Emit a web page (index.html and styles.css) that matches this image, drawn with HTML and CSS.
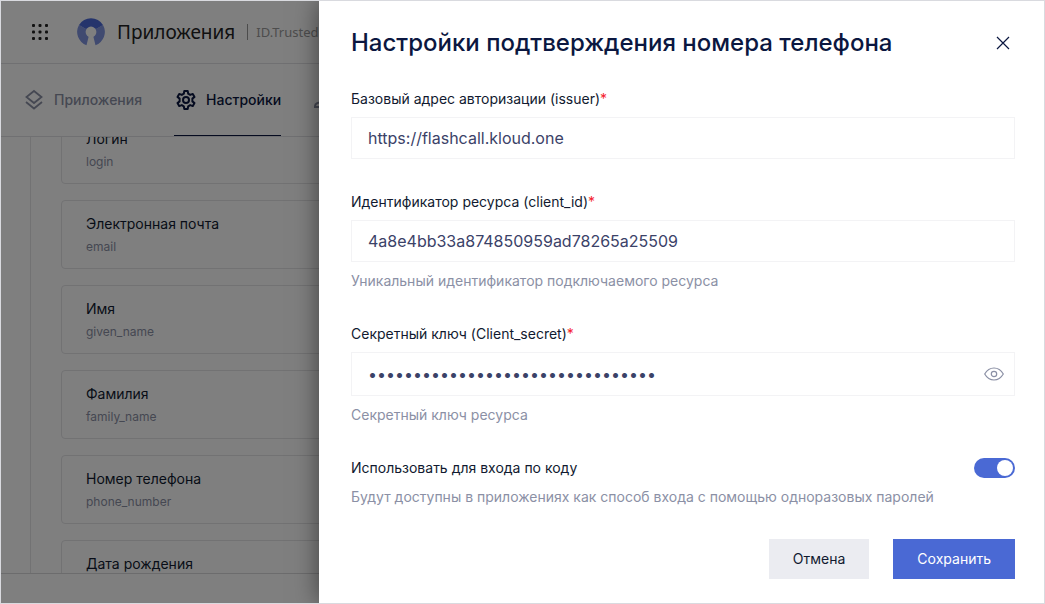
FILE: index.html
```html
<!DOCTYPE html>
<html lang="ru">
<head>
  <meta charset="UTF-8">
  <meta name="viewport" content="width=device-width, initial-scale=1.0">
  <title>Настройки подтверждения номера телефона</title>
  <link rel="stylesheet" href="styles.css">
</head>
<body>

<div class="app">
  <header class="header">
    <button class="apps-button" type="button" aria-label="Меню">
      <svg width="18" height="18" viewBox="0 0 18 18" fill="#222">
        <rect x="1" y="1" width="3" height="3" rx="1"/><rect x="7.500" y="1" width="3" height="3" rx="1"/><rect x="14" y="1" width="3" height="3" rx="1"/>
        <rect x="1" y="7.500" width="3" height="3" rx="1"/><rect x="7.500" y="7.500" width="3" height="3" rx="1"/><rect x="14" y="7.500" width="3" height="3" rx="1"/>
        <rect x="1" y="14" width="3" height="3" rx="1"/><rect x="7.500" y="14" width="3" height="3" rx="1"/><rect x="14" y="14" width="3" height="3" rx="1"/>
      </svg>
    </button>
    <svg class="logo" width="28" height="28" viewBox="0 0 28 28">
      <path fill="#8095e0" d="M2 7 L14 14 L26 7 A14 14 0 0 1 18.500 27.200 L16.200 18 H11.800 L9.500 27.200 A14 14 0 0 1 2 7Z"/>
      <path fill="#4a69d8" d="M2 7 A14 14 0 0 1 26 7 L14 14Z"/>
      <circle cx="14" cy="14" r="5.400" fill="#fff"/>
    </svg>
    <span class="header-title">Приложения</span>
    <span class="header-sub">ID.Trusted</span>
  </header>

  <nav class="tabs">
    <a class="tab" href="#apps">
      <svg width="24" height="24" viewBox="0 0 24 24" fill="none" stroke="currentColor" stroke-width="1.800">
        <path d="M12 3 L19.500 9 L12 15 L4.500 9Z"/>
        <path d="M4 14 L12 20.500 L20 14"/>
      </svg>
      Приложения
    </a>
    <a class="tab tab-active" href="#settings">
      <svg width="24" height="24" viewBox="0 0 24 24" fill="none" stroke="currentColor" stroke-width="2" stroke-linejoin="round">
        <path d="M10.300 3 h3.400 l.5 2.700 2 1.200 2.600-1 1.700 3 -2.100 1.700 v2.800 l2.100 1.700 -1.700 3 -2.600-1 -2 1.200 -.5 2.700 h-3.400 l-.5-2.700 -2-1.200 -2.600 1 -1.700-3 2.100-1.700 v-2.800 l-2.100-1.700 1.700-3 2.600 1 2-1.200Z"/>
        <circle cx="12" cy="12" r="3"/>
      </svg>
      Настройки
    </a>
    <a class="tab" href="#users" aria-label="Пользователи">
      <svg width="24" height="24" viewBox="0 0 24 24" fill="none" stroke="currentColor" stroke-width="2">
        <circle cx="12" cy="8" r="4"/>
        <path d="M2 19 V18 C2 15 5 14 12 14 C19 14 22 15 22 18 V19Z"/>
      </svg>
    </a>
  </nav>

  <main class="content">
    <div class="panel">
      <div class="claim"><span class="claim-name">Логин</span><span class="claim-key">login</span></div>
      <div class="claim"><span class="claim-name">Электронная почта</span><span class="claim-key">email</span></div>
      <div class="claim"><span class="claim-name">Имя</span><span class="claim-key">given_name</span></div>
      <div class="claim"><span class="claim-name">Фамилия</span><span class="claim-key">family_name</span></div>
      <div class="claim"><span class="claim-name">Номер телефона</span><span class="claim-key">phone_number</span></div>
      <div class="claim"><span class="claim-name">Дата рождения</span></div>
    </div>
  </main>

  <footer class="footer"></footer>

  <div class="overlay"></div>

  <form class="drawer">
    <div class="drawer-header">
      <h1>Настройки подтверждения номера телефона</h1>
      <button class="close-button" type="button" aria-label="Закрыть">
        <svg width="14" height="14" viewBox="0 0 14 14" fill="none" stroke="#0b1740" stroke-width="1.200">
          <path d="M1 1 L13 13 M13 1 L1 13"/>
        </svg>
      </button>
    </div>

    <div class="field">
      <label for="issuer">Базовый адрес авторизации (issuer)<span class="required">*</span></label>
      <input class="text-input" type="text" id="issuer" value="https://flashcall.kloud.one">
    </div>

    <div class="field">
      <label for="client-id">Идентификатор ресурса (client_id)<span class="required">*</span></label>
      <input class="text-input" type="text" id="client-id" value="4a8e4bb33a874850959ad78265a25509">
      <p class="hint">Уникальный идентификатор подключаемого ресурса</p>
    </div>

    <div class="field">
      <label for="client-secret">Секретный ключ (Client_secret)<span class="required">*</span></label>
      <div class="secret">
        <input type="password" id="client-secret" value="00000000000000000000000000000000">
        <button class="eye-button" type="button" aria-label="Показать ключ">
          <svg width="20" height="14" viewBox="0 0 20 14" fill="none" stroke="#8b90a5" stroke-width="1.200">
            <path d="M0.700 7 C3 3 6 1 10 1 C14 1 17 3 19.300 7 C17 11 14 13 10 13 C6 13 3 11 0.700 7Z"/>
            <circle cx="10" cy="7" r="2.700"/>
          </svg>
        </button>
      </div>
      <p class="hint">Секретный ключ ресурса</p>
    </div>

    <div class="field">
      <div class="switch-row">
        <label for="use-code">Использовать для входа по коду</label>
        <input class="switch" type="checkbox" id="use-code" checked>
      </div>
      <p class="hint">Будут доступны в приложениях как способ входа с помощью одноразовых паролей</p>
    </div>

    <div class="actions">
      <button class="button button-cancel" type="button">Отмена</button>
      <button class="button button-save" type="submit">Сохранить</button>
    </div>
  </form>
</div>

</body>
</html>
```
FILE: styles.css
```css
* {
  box-sizing: border-box;
}

body {
  margin: 0;
  font-family: Inter, sans-serif;
  font-size: 14px;
  line-height: 20px;
  color: #0b1740;
}

button {
  padding: 0;
  border: none;
  background: none;
  font: inherit;
  cursor: pointer;
}

svg {
  display: block;
  flex-shrink: 0;
}

.app {
  position: relative;
  display: flex;
  flex-direction: column;
  height: 100vh;
  border: 1px solid #d9dadf;
  overflow: hidden;
}

/* Header */
.header {
  display: flex;
  align-items: center;
  height: 63px;
  flex-shrink: 0;
  padding-left: 30px;
  border-bottom: 1px solid #e0e0e4;
}

.logo {
  margin-left: 28px;
}

.header-title {
  margin-left: 12px;
  font-family: "Noto Sans", sans-serif;
  font-size: 19px;
  color: #222;
}

.header-sub {
  margin-left: 12px;
  padding-left: 8px;
  border-left: 1px solid #999;
  font-family: "Noto Sans", sans-serif;
  font-size: 13px;
  line-height: 16px;
  color: #9a9a9a;
}

/* Tabs */
.tabs {
  display: flex;
  gap: 32px;
  height: 73px;
  flex-shrink: 0;
  padding-left: 21px;
  border-bottom: 1px solid #e0e0e4;
}

.tab {
  display: flex;
  align-items: center;
  gap: 8px;
  border-bottom: 1px solid transparent;
  font-weight: 500;
  color: #8b90a5;
  text-decoration: none;
}

.tab-active {
  border-color: #0b1740;
  color: #0b1740;
}

/* List of profile fields */
.content {
  flex: 1;
  min-height: 0;
  padding-left: 29px;
  overflow: hidden;
}

.panel {
  display: flex;
  flex-direction: column;
  gap: 16px;
  margin-top: -22px;
  padding-left: 30px;
  border-left: 1px solid #e4e4e6;
}

.claim {
  display: flex;
  flex-direction: column;
  gap: 5px;
  height: 69px;
  flex-shrink: 0;
  padding: 13px 24px;
  border: 1px solid #e4e4e6;
  border-radius: 4px;
}

.claim-name {
  color: #111a30;
}

.claim-key {
  font-size: 12px;
  line-height: 16px;
  color: #8b90a5;
}

.footer {
  height: 30px;
  flex-shrink: 0;
  border-top: 1px solid #d8d8da;
}

.overlay {
  position: absolute;
  inset: 0;
  background: rgba(0, 0, 0, 0.5);
}

/* Drawer */
.drawer {
  position: absolute;
  top: 0;
  right: 0;
  bottom: 0;
  left: 318px;
  display: flex;
  flex-direction: column;
  gap: 33px;
  padding: 26px 29px 24px 32px;
  background: #fff;
  box-shadow: 0 0 24px rgba(0, 0, 0, 0.5);
  overflow: auto;
}

.drawer-header {
  display: flex;
  align-items: center;
  justify-content: space-between;
  margin-bottom: -3px;
}

h1 {
  margin: 0;
  font-size: 24px;
  line-height: 32px;
  font-weight: 500;
}

.close-button {
  padding: 5px;
}

.field {
  display: flex;
  flex-direction: column;
}

label {
  color: #111a30;
}

.required {
  color: #f5222d;
}

.text-input,
.secret {
  margin-top: 8px;
  border: 1px solid #f3f3f5;
}

.text-input {
  height: 42px;
  padding: 0 16px;
}

.secret {
  display: flex;
  align-items: center;
  height: 44px;
  padding: 0 10px 0 16px;
}

.secret input {
  flex: 1;
  min-width: 0;
  padding: 0;
  border: none;
}

.text-input,
.secret input {
  font-family: inherit;
  font-size: 16px;
  color: #3b4268;
  background: none;
  outline: none;
}

.hint {
  margin: 9px 0 0;
  color: #8b90a5;
}

.switch-row {
  display: flex;
  align-items: center;
  justify-content: space-between;
}

.switch {
  display: flex;
  justify-content: flex-end;
  width: 41px;
  height: 20px;
  margin: 0;
  padding: 2px;
  border-radius: 10px;
  background: #4a69d4;
  appearance: none;
  cursor: pointer;
}

.switch::before {
  content: "";
  width: 16px;
  height: 16px;
  border-radius: 50%;
  background: #fff;
}

.switch:not(:checked) {
  justify-content: flex-start;
  background: #c4c7d3;
}

.actions {
  display: flex;
  justify-content: flex-end;
  gap: 24px;
  margin-top: -1px;
}

.button {
  height: 40px;
  padding: 0 24px;
}

.button-cancel {
  background: #ebecf1;
  color: #111a30;
}

.button-save {
  background: #4a69d4;
  color: #fff;
}
```
